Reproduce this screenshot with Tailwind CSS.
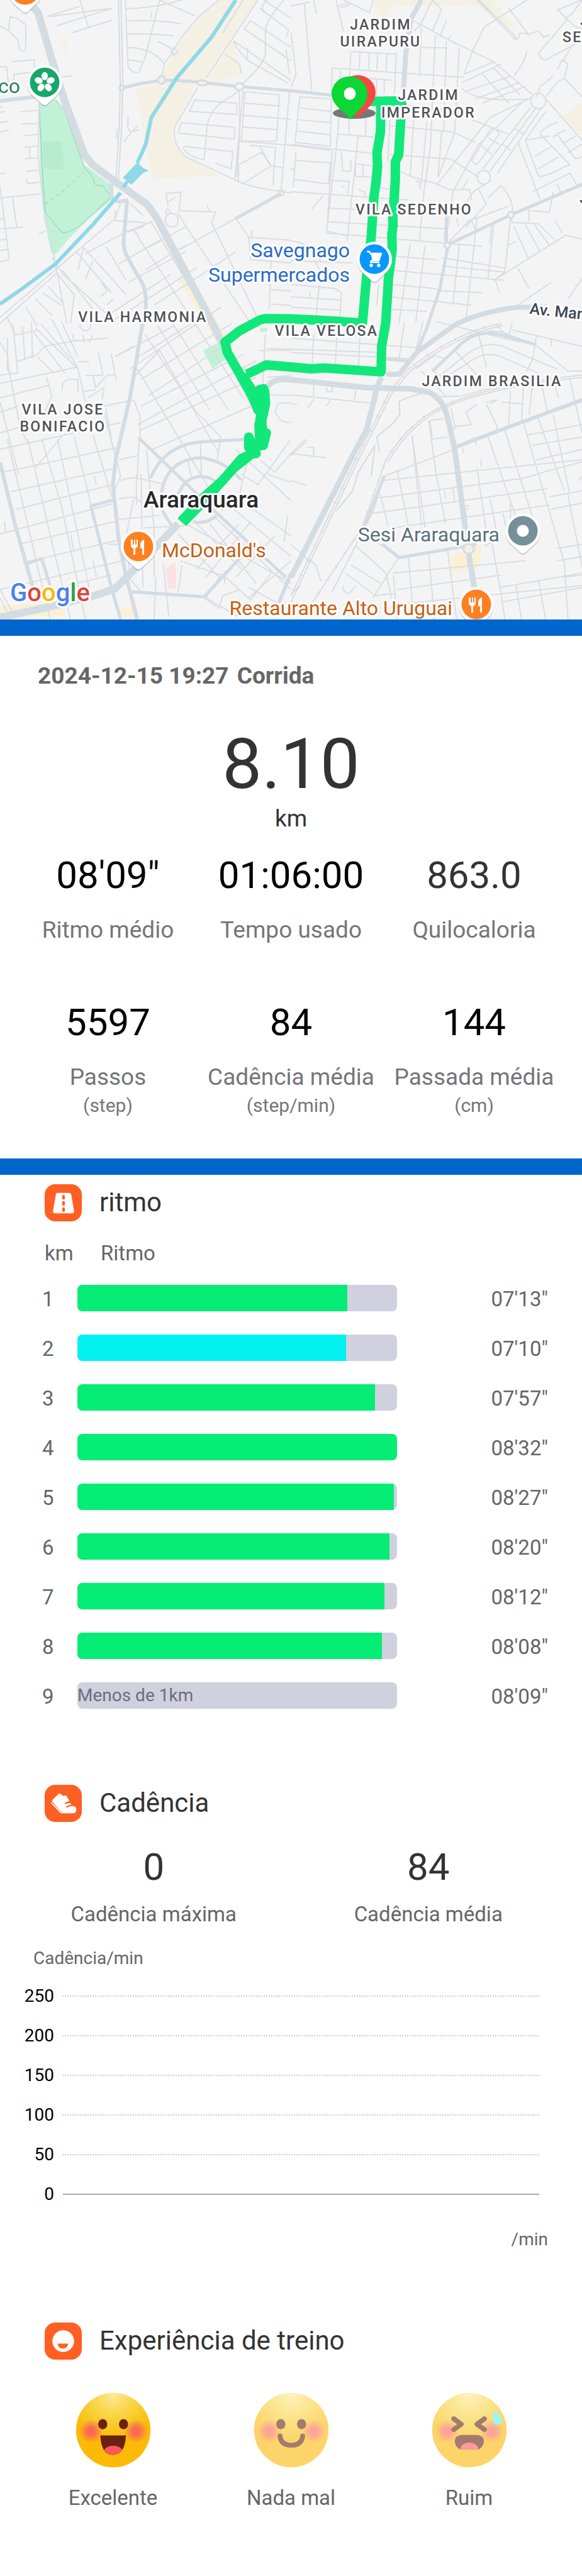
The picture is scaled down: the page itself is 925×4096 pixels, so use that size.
<!DOCTYPE html>
<html lang="pt">
<head>
<meta charset="utf-8">
<meta name="viewport" content="width=device-width, initial-scale=1">
<title>Corrida</title>
<script src="https://cdn.jsdelivr.net/npm/@tailwindcss/browser@4"></script>
</head>
<body class="bg-white font-[Roboto,sans-serif] text-[#333]">
<main>
<section aria-label="Mapa do percurso" class="bg-[#f5f4f5]">
<svg viewBox="0 0 925 985" class="block w-full h-auto" xmlns="http://www.w3.org/2000/svg">
  <defs>
    <g id="pin"><path d="M0 36C-3 36-5 34-8 31L-19 21A28 28 0 1 1 19 21L8 31C5 34 3 36 0 36Z" fill="#8a8f96" opacity=".45" transform="translate(0 2)"/><path d="M0 36C-3 36-5 34-8 31L-19 21A28 28 0 1 1 19 21L8 31C5 34 3 36 0 36Z" fill="#fff"/></g>
    <g id="food"><use href="#pin"/><circle r="23.5" fill="#ff8022"/><path d="M-12-11v8c0 4 2 5 4 6v10h3V3c2-1 4-2 4-6v-8h-2v8h-2v-8h-2v8h-2v-8ZM9-11C5-10 3-6 3-3v6h3v10h3Z" fill="#fff"/></g>
  </defs>
  <g transform="scale(.295 .3278)" fill="none">
    <g fill="#f4f1e4">
      <path d="M1170 0H1390L1110 380L1050 420L945 610Q930 700 1000 760L1185 852L820 870L730 430L870 400L880 350L950 240L1070 80ZM1210 260L1260 180L1300 370L1130 400L1120 380ZM330 195L365 190L362 270ZM2000 0H2650L2780 130L2768 145L2650 70L2560 25L2110 30L2080 90L2040 70ZM3020 570L3136 500V660Z"/>
      <path fill="#faf0d6" d="M960 1350L1010 1310L1170 1560L1220 1640L1180 1680ZM2430 2700L2590 2640V2720L2560 2770H2430ZM0 2940L340 2920L350 2990H0ZM640 2960L740 2930V2990H640Z"/>
      <path fill="#c1f1d6" d="M210 500L300 480L350 540L455 800L590 890L600 970L480 1060L380 1150L300 1235L275 1220L235 1050L215 800ZM1095 1700L1180 1660L1220 1740L1145 1790ZM1400 1590H1440V1610H1400Z"/>
      <path fill="#fbe1e1" d="M890 2765L945 2725L950 2850L910 2860Z"/>
      <path fill="#b8ecd0" d="M230 685H330L345 820H235Z"/>
    </g>
    <g stroke="#93c9ad" stroke-width="1"><path vector-effect="non-scaling-stroke" d="M212 530L230 860L245 1030L335 1130Q400 1125 460 1070L600 955L550 900Q500 905 505 870L470 825L455 815L345 530L300 485"/><path vector-effect="non-scaling-stroke" stroke-dasharray="7 4" d="M240 990L330 935L455 830"/></g>
    <g stroke="#d7dee4" stroke-width="2" stroke-linejoin="round">
      <path vector-effect="non-scaling-stroke" d="M0 125L45 150L95 190L105 240Q120 255 138 240L140 120L90 88L55 80L45 150M65 300L185 290V330M75 410V360L240 345M0 325L35 322L45 400M300 375L390 368M255 80L430 30M275 80L605 40M305 125L605 40M385 160L605 97M430 0L478 135M210 500L205 760L240 1050L290 1240L360 1568M110 542L200 535M115 600H200M122 660L205 652M130 715L205 708M160 710V765M133 770L208 765M143 832L210 825M140 868L152 890L214 884M0 520L20 518M0 545L25 540M0 595L40 588M0 640L48 630M0 960L218 940M0 900L50 1260L0 1270M0 1110L125 1102M68 960L90 1100M0 1065L20 1060M0 1165L35 1160M0 1215L45 1210M210 1135L245 1120M0 842L35 840"/>
      <path vector-effect="non-scaling-stroke" d="M675 0L690 320Q700 350 745 355L785 270L860 0M680 42Q830 40 980 0M860 0L1052 78M680 102Q850 95 975 115M685 165Q800 160 940 175M690 230Q820 230 885 310M690 290L765 300M815 60V88M850 200L935 240L980 180L1070 80L1180 0M935 250L890 300L870 370M935 270L960 250L940 235L920 250ZM1390 0L1110 380M1310 0L1200 160M1400 40L1555 145L1540 180M1350 100L1568 230M1350 100L1315 140L1568 295M1260 200L1568 390M1260 200L1275 230L1330 290L1555 405M1210 260L1290 310L1300 355M1335 230L1330 290M1440 0Q1400 30 1420 60M1530 0Q1430 100 1430 150V260Q1420 320 1300 410M1420 0L1570 90M1540 240L1560 360"/>
      <path vector-effect="non-scaling-stroke" d="M1050 485L1270 500Q1280 510 1275 555L1020 540ZM975 595L1265 618L1262 675L960 645ZM990 710L1255 735L1245 820L1160 790M985 715Q1010 760 1100 775M1290 440L1175 510Q1120 560 1115 620L1100 775M1065 425L945 610Q920 690 1000 760L1260 870Q1330 910 1568 935M1310 440L1265 870M1290 440V680L1275 860M1320 445L1505 460L1490 685H1300L1320 445M1320 500L1510 515M1310 560L1568 578M1305 615L1495 630M1285 685L1568 705L1780 730M1285 800L1410 738L1460 805L1310 890L1285 880ZM1345 705L1485 715L1470 900M1400 710L1460 805L1520 812M1560 440L1515 920M1500 935A15 15 0 1 0 1530 935A15 15 0 1 0 1500 935"/>
      <path vector-effect="non-scaling-stroke" d="M895 938L975 932L965 1022L1162 1028L1140 1080L1400 1568M895 938L905 1000M905 980L945 958M890 1068A35 33 0 1 0 960 1068A35 33 0 1 0 890 1068M893 1028A12 12 0 1 0 917 1028A12 12 0 1 0 893 1028M1115 995L1130 1025M955 1030L1000 1095L1350 1568M620 1020V1070L780 1080L770 1100L690 1125M700 985L770 1045M650 985L620 1060L0 1540M630 560M690 560L688 620L705 640L750 630M740 610L705 645L665 690M630 625V670M1500 940L1270 1060L950 1220M1270 1060L1340 1150L1568 1165M1340 1150L1350 1260L1568 1275M1355 1115V1160M1460 1270L1450 1500M1460 1405L1568 1412M1460 1475L1568 1482"/>
      <path vector-effect="non-scaling-stroke" d="M450 1200L680 1430M570 1195L680 1360M415 1225L600 1420M450 1200L420 1310M500 1265L460 1355M545 1365L575 1410M335 1310L500 1500M300 1320L400 1430L380 1568M230 1420L330 1480M260 1390L340 1470M190 1450L280 1530M140 1490L200 1580M40 1540L80 1620M0 1568L300 1330M280 1250L340 1330L620 1560M540 1440L580 1410M575 1480L610 1450M700 1120Q730 1110 750 1160L1000 1500M810 1070L1060 1450M690 1120L820 1075M460 1230L690 1120M640 1280L870 1160M690 1370L1000 1220M780 1310L1000 1190M530 1560L920 1330M830 1480L1090 1330L1270 1220M600 1560L1060 1300"/>
      <path vector-effect="non-scaling-stroke" d="M740 1790L1200 2480M780 1620L1050 1990L1190 2120M850 1580L1130 1990M930 1568L1230 1990M1000 1500L1310 1930M1060 1450L1190 1660M700 1790L1190 1490M730 1740L1100 1530M620 1730L940 1580M760 1840L1250 1568M800 1920L1300 1620M760 1970L1310 1720M750 2090L1380 1830M820 2180L1380 1960M740 2060L1380 1750M720 1830L860 1700L1180 2200M1000 1100L800 1200M1400 1700H1568M1430 1620L1415 1900M1440 1690L2050 1710M1440 1830L1568 1822M1430 1915L1568 1918M1500 1955H1568M1500 1955L1480 2000L1520 2045L1568 2050"/>
      <path vector-effect="non-scaling-stroke" d="M70 1568L95 1810L0 1820M0 1660L40 1720L50 1810M40 1640V1800M120 1580L135 1750M170 1560L175 1740M80 1625L210 1600M90 1755L200 1720L240 1680M180 1610L350 1810M190 1590L410 1780M220 1570L380 1740M280 1550L420 1790L460 1950M330 1560L420 1730M200 1730L290 1810M240 1680L420 1650M430 1570Q430 1600 460 1605Q490 1600 490 1570M390 1620L400 1655L580 1640M445 1625L455 1660M500 1625L480 1660M420 1755H480M530 1710L555 1820L460 1822M600 1720L625 1840M420 1900V1840H370Q330 1850 335 1895M500 1820L515 1880L580 1820H615M515 1890L450 1900M475 1930L560 1880L550 1940M620 1730L720 1680M0 1860L420 1780M0 1930L260 1870M0 2000L100 1970M50 1800L110 2080L150 2150M0 1950L100 2300M0 2100L120 2070M250 1830L280 1920L240 2000M560 1970L720 1940L755 2020V2110L745 2130M570 1980L600 2130"/>
      <path vector-effect="non-scaling-stroke" d="M40 2130L270 3005M150 2130L290 2670L380 3005M225 2130L330 2450L460 3005M310 2130L480 2850M400 2120L560 2700L600 2850M500 2110L600 2400M0 2180L650 2050M20 2290L640 2170M60 2385L630 2270M90 2470L610 2350M0 2590L600 2445M100 2640L620 2530M120 2730L640 2620M0 2860L660 2720M230 2870L600 2790M560 2000L650 2310L600 2410M640 2230L745 2210M650 2330Q720 2310 740 2320L870 2345M735 2300V2450M750 2120L740 2320M790 2180L800 2300L830 2560V2800M640 2420L720 2410L770 2440M720 2420L680 2600L700 2800M760 2300L770 2850M640 2520L860 2500M190 2270L340 2110M510 2310L518 2350M780 2560L1010 2550M380 2590L400 2680M500 2720L520 2800M0 2860L80 2990M0 2900L50 2990M25 2530L30 2580M580 2640H640"/>
      <path vector-effect="non-scaling-stroke" d="M1010 2225L1030 2310M1080 2150L1085 2300M1190 2120L1170 2230M1300 2300L1390 2350L1568 2130M1400 2230L1480 2290L1568 2200M1270 2180L1568 2430M1330 2250L1290 2400M1440 2300L1568 2340M1130 2540L1380 2830M1160 2510L1568 2860M1060 2540L1300 2760M960 2590L1180 2800M1000 2540L1568 2830M1260 2470L1568 2700M1300 2430L1568 2600M1290 2540L1060 2760M1350 2530L1110 2800M1480 2600L1270 2800M1568 2720L1340 2900M970 2720L1190 2790L1110 2900L1280 2990M700 2810L760 2870M840 2800L830 3005M980 2740L960 2870M880 2740L910 2990M1100 2900L1180 2950L1200 2890L1290 2860M1190 2780L1350 2910L1460 2780M1340 2850L1568 2960M1550 2500L1530 2630M1210 2770V2830"/>
      <path vector-effect="non-scaling-stroke" d="M1568 30L1670 10M1568 160L1595 360L1570 420M1640 20L1680 440M1690 0L1705 70M1810 0L1850 150M1820 30L1880 10M1830 40L1890 20M1850 0L1990 60L2010 0M1895 250L2130 262M1890 250L1880 450M1940 255L1935 335M1990 258L1985 338M2035 258L2030 340M2085 260L2080 345M2135 255L2125 450M1790 330L2500 375M1790 330L1785 450M1835 340L1830 440M1985 380L2110 390M2030 390V480M2070 390V450M2230 100L2410 190L2660 300L2870 460M2230 150L2265 120L2330 0L2380 45L2330 150M2370 180L2405 100M2410 195L2430 175M2270 130L2260 370M2345 170L2320 700L2290 900M2405 200L2390 640M2475 230L2450 640L2360 860M2270 230L2400 232M2180 510L2500 540M2100 610L2440 640L2560 690M2100 750L2430 772L2580 860M2160 830Q2200 860 2350 890L2420 920H2530M2230 560L2210 850M2300 590L2270 890M2380 630L2360 860M2100 580L2090 780"/>
      <path vector-effect="non-scaling-stroke" d="M2490 430Q2570 500 2850 480M2500 360L2660 300M2490 400L2700 310M2520 440L2750 370M2560 480L2800 400M2600 500L2830 420M2600 360L2740 500M2660 330L2800 460M2500 360L2540 260L2610 130L2840 0M2580 0L2770 170L2785 195M2570 0L2780 195M2740 40L2850 170M2790 190L2800 160L2850 165L2900 150L2930 180L2960 170M3000 50L3130 0M3000 40L3050 90L3100 130L3136 140M3040 90L3080 70L3136 0M2900 260L3060 90M2900 260Q2930 310 2960 280L3130 200M3030 300L3110 180M3000 340L3030 290L3060 310L3040 380L3000 400L2940 470M3040 380L3136 470M2980 370L2910 420L2890 470M2840 250L2820 300L2770 370M2860 490A32 30 0 1 0 2940 490A32 30 0 1 0 2860 490M2570 860A34 32 0 1 0 2642 860A34 32 0 1 0 2570 860M2890 520L2640 830M2860 520L2600 820M2920 520L2680 840M2820 490L2580 700L2440 930L2400 1180M2870 470L2640 570L2350 900M2940 480L3136 680M2540 580L2740 650M2540 780L2640 630Q2670 610 2690 650L2570 800ZM2600 710L2650 750M2630 670L2690 700M2710 700L2750 730M2770 620L2820 650M2940 540L2830 680L2960 660M2790 690L2910 970M2910 650Q2920 620 3010 590M2830 680L2900 850Q2910 870 3040 810L3070 800L2910 650M2880 760L2970 710M2900 820L3010 760M3000 650L3050 630M2985 670Q2980 650 3010 660L3100 770L3136 760M3030 700L3100 660M3060 740L3136 700M2870 930L3070 840L3110 900M2920 980L3136 890M2700 900Q2770 970 2760 1040M2700 900L2630 960M2580 920L2620 990L2510 1100M2640 880L2550 930L2500 1000M2530 920L2540 970M2490 920L2520 870M3000 890L3030 950"/>
      <path vector-effect="non-scaling-stroke" d="M1568 930L2200 970M1568 700L2060 750M1615 470L1785 480L1780 710L1590 690ZM1620 525L1785 540M1600 580L1785 595M1595 635L1785 655M1595 735L1580 910M1590 778L1780 790L1770 892L1585 870M1568 820L1585 822M1840 740L1845 830H1890V775M1910 795L2010 805M1915 800V855L2010 860M1955 800V855M1790 875L1880 880L1875 940M1840 905H1860M1930 920L1965 930V960M1680 1015L1740 950M1830 490L1820 650L2010 665M1880 560V650M1970 560V665M1820 650L1760 1120M1930 660L1870 1170M1790 730L1760 1130L2600 1195M1770 1010L2000 1020M1760 1075L2400 1110M1760 1120L1870 1145M2060 800L2050 910L2100 920M2240 880H2260L2265 920M2290 880L2260 1170M2400 1060L2395 1170M2460 1060L2470 1100M2100 1240L2350 1260M2100 1310L2720 1360M2100 1380L2350 1400M2100 1440L2540 1480M2100 1500L2300 1510M2210 1180L2150 1568M2290 1190L2240 1560M2475 1180L2440 1480M2570 1060L2510 1560M2660 1080L2630 1350M2750 1060L2720 1320L2660 1360M2380 1250L2720 1300M2380 1290L2720 1320M2350 1410L2600 1420M2410 1180L2530 1070L2740 1000M2540 1070L2570 1130M2650 1080L2640 1180M2750 1050L2760 1080L2900 1085L2990 1165M2770 1100L2850 1260M2830 1090L2910 1220M2880 1090L2960 1190M2660 1360L3050 1140L3136 1160M2670 1360L2690 1420M2790 1300L2850 1400M2980 930L2960 1030L2840 1020M2850 1020V1075M2990 1070L3030 1130M2740 1190L2780 1170M2790 1480L2970 1370M3136 1350L3060 1450M1568 1170Q1660 1170 1730 1270M1690 1260L1730 1320M1568 1380L1810 1400L1840 1420L1830 1568M1568 1440L1840 1455M1568 1490L1840 1505M1720 1380L1700 1568M1670 1420V1450M1568 1265L1900 1275M2040 1380L2030 1480"/>
      <path vector-effect="non-scaling-stroke" d="M1568 1640L2300 1690M1568 1710L2200 1740M1690 1620L1680 1800M1815 1620L1805 1800M1940 1620L1930 1800M2180 1560L2150 1740M1690 1850V1930M1920 1870L1910 1940M1568 1915L1990 1955M1760 1880V1900H1790V1860M1690 1935L1660 1980M1780 1940L1760 1970M1568 1960H1600M1568 2210L1640 2150Q1660 2130 1640 2135L1568 2200L1760 2220M1655 2170H1690V2210M1568 2330L1650 2355M2280 1560L2240 1700M2350 1560L2800 1660M2330 1800L2460 1690Q2560 1590 2700 1610L2880 1670L3060 1800H3136M2360 1830L2500 1730Q2600 1650 2710 1680L3000 1790M2400 1830L2540 1750Q2620 1700 2700 1730L2900 1810M2240 1790L2340 1725L2400 1740M2450 1700L2580 1830M2580 1630L2620 1780M2270 1800L2400 1920M2340 1800L2430 1880M2370 1925L2490 1920L2700 1870M2760 1600L3136 1680M2970 1640V1680M2760 1560L2740 1640L2670 1570M2890 1630L2870 1740L2840 1800M2310 2040L2390 2030M2315 2040L2330 2130L2410 2120M2310 2040L2350 2300L2400 2540M2220 2110L2270 2550M2430 1980L2450 2070L2540 2060L2510 2000L2570 1960M2440 2080L2460 2080M2620 1950L2680 1940L2640 1960M2620 1960L2680 2070L2660 2110M2750 1900L2740 2070M2820 1880L2810 2040M2870 1860L2850 2010M2920 1870L2950 2000M2980 1850L3010 1930M3070 1840L3136 2100M2700 1950L2820 1960"/>
      <path vector-effect="non-scaling-stroke" d="M2070 2310L2450 2180M2070 2330L3136 2230M2040 2415L2820 2320L2970 2280L3136 2240M2010 2490L2950 2370M2120 2560L2960 2450M2140 2280L2200 2550M2050 2400L2090 2550M2220 2110L2290 2560M2490 2170L2500 2200M2570 2270L2620 2580M2630 2120L2800 2560M2720 2090L2870 2510M2820 2050L3040 2730L3060 3005M2900 2030L3040 2380M2980 2010L3070 2400M2840 2110L3136 2060M2870 2160L3136 2120M2890 2230L3136 2180M2960 2410L3136 2380M2970 2470L3136 2440M3060 2400L3136 2750M2640 2420L2680 2600M2710 2490L2730 2570M2750 2430V2560M2395 2380L2400 2420M2440 2370L2450 2430M2500 2455H2530M2500 2440V2470H2525M2550 2120L2570 2160M2590 2230L2595 2265M2070 2310L2010 2480L1960 2570L1790 2870M1920 2650L2080 2780L2110 2900M1960 2590L2150 2700L2080 2800L2010 2900M1890 2740L2050 2830M1860 2780L2010 2880M2120 2780L2830 2720M2140 2860L2700 2790M2160 2930L3136 2840M2120 2790L2140 3005M2200 2700L2230 3005M2310 2680L2340 3005M2410 2660L2460 3005M2610 2650L2650 2630L2700 2880L2720 3005M2690 2850L3136 2780M2700 2920L3136 2850M2780 2840L2810 3005M2900 2810L2940 3005M3030 2800L3136 2790M3000 2660L3136 2640M3000 2720L3136 2700M1568 2640L1640 2700L1700 2740L1730 2820M1850 2840Q1840 2870 1880 2880L1920 2840M2010 2890L2130 2880M1568 2880L1620 2840M3136 2310L3120 2330"/>
    </g>
    <g stroke="#d3d4d8" stroke-width="1.5">
      <path vector-effect="non-scaling-stroke" d="M2700 1570Q2480 1600 2200 1790L2100 1900L1900 2260L1568 2890M2710 1580Q2490 1610 2210 1800L2110 1910L1910 2270L1568 2920M3136 1820Q2700 1860 2440 1950Q2220 2020 2080 2230L1950 2560L1670 2940M3136 1830Q2700 1870 2440 1960Q2230 2030 2090 2240"/>
      <path vector-effect="non-scaling-stroke" stroke="#dadbde" stroke-width="6" stroke-dasharray="1.5 24" d="M2700 1570Q2480 1600 2200 1790L2100 1900L1900 2260L1568 2890M2440 1950Q2220 2020 2080 2230L1950 2560L1670 2940"/>
      <path vector-effect="non-scaling-stroke" stroke="#d3dae0" stroke-width="2" d="M2300 1900Q2150 1940 2150 1950L2155 2010L2120 2050L2030 2120L2045 2190M2020 2160L1930 2290L1900 2380L1810 2480M2020 2160L2000 2310"/>
    </g>
    <g stroke="#d3dce3" stroke-linejoin="round">
      <path vector-effect="non-scaling-stroke" stroke-width="6" d="M645 0L655 400L650 600L630 880M600 890V950Q610 990 690 970"/>
      <path vector-effect="non-scaling-stroke" stroke="#f5f4f5" stroke-width="2" d="M645 0L655 400L650 600L630 880"/>
      <path vector-effect="non-scaling-stroke" stroke-width="5" d="M650 428L760 405L870 390L950 390L1090 400L1290 420L1568 440L1790 462M3136 895L2758 1040L2415 1185L2370 1400L2300 1590L2248 1700M2405 1050V1180M1515 940L1270 1060M610 2425L490 2455L600 2850L650 3005M140 2735L225 2710L280 2870M2568 2640L2150 2705L2060 2640M2070 2310L1960 2560M2330 1800L2460 1690Q2560 1590 2700 1625L2880 1670M2060 1740L2200 1752"/>
      <path vector-effect="non-scaling-stroke" stroke-width="5" d="M810 2320Q890 2150 1100 2142L1320 2132M870 2390Q900 2225 1090 2220Q1220 2240 1300 2330M960 2400Q1000 2305 1100 2312Q1160 2320 1190 2370M875 2475Q900 2520 940 2565M1040 2530Q1120 2545 1165 2500M745 2122L930 2282L1160 2482L1540 2800M700 2870L1100 2895L1300 2700"/>
      <path vector-effect="non-scaling-stroke" stroke-width="6" d="M685 970L665 1180Q670 1230 700 1270L770 1380Q790 1420 785 1500L760 1610L700 1930L625 2220L608 2350L640 2620L680 2800L740 3005M0 2242L80 2540L180 2860M2450 2170L2700 2085L3136 1940M0 490L190 470M1500 2930L1568 2780"/>
      <path vector-effect="non-scaling-stroke" stroke-width="8" d="M2270 0L2215 90L2185 270L2173 450M2950 1490H2790Q2600 1510 2458 1572L2248 1707L2150 1815H2080"/>
      <path vector-effect="non-scaling-stroke" stroke-width="9" d="M1440 1880Q1470 1830 1568 1842L1968 1880L2218 1887L2308 1902Q2390 1930 2415 2040L2450 2180L2505 2550L2518 2630M2525 2690L2555 2850M2055 1830L2030 1880L2010 1960L1975 2085L1900 2210L1568 2800"/>
      <path vector-effect="non-scaling-stroke" stroke-width="12" d="M140 0L205 60L270 260L345 480L455 750L500 800L620 880L790 990L840 1050L1000 1320L1110 1510L1190 1650L1380 1980M0 2995L260 2945L500 2892L620 2855L760 2730L960 2540"/>
      <g fill="#f4f1e4" stroke-width="3"><ellipse vector-effect="non-scaling-stroke" cx="870" cy="388" rx="20" ry="18"/><ellipse vector-effect="non-scaling-stroke" cx="1090" cy="402" rx="28" ry="13"/><ellipse vector-effect="non-scaling-stroke" cx="2525" cy="2662" rx="28" ry="24"/></g>
      <g fill="#f5f4f5" stroke-width="3"><ellipse vector-effect="non-scaling-stroke" cx="1290" cy="420" rx="24" ry="17"/><circle vector-effect="non-scaling-stroke" cx="656" cy="427" r="12"/><circle vector-effect="non-scaling-stroke" cx="2752" cy="1042" r="15"/><circle vector-effect="non-scaling-stroke" cx="2410" cy="1190" r="15"/></g>
    </g>
    <path vector-effect="non-scaling-stroke" stroke="#8fd8e8" stroke-width="6" d="M1270 0L1140 180L950 380L815 570L785 700L740 790M685 880L665 910M650 935L500 1090L300 1280L120 1400L0 1475"/>
    <path fill="#8fd8e8" d="M740 788L772 815L802 828L770 840L708 896L662 862Z"/>
    <g stroke="#12e87a" stroke-width="15" stroke-linejoin="round">
      <path vector-effect="non-scaling-stroke" d="M1990 492L2140 490L2165 505L2158 600L2148 750L2130 785L2130 870L2124 960L2116 1060L2118 1090L2111 1140L2113 1210L2106 1260L2093 1350L2078 1568L2056 1680L2053 1804L1748 1785L1678 1789L1568 1780L1435 1770L1330 1815"/>
      <path vector-effect="non-scaling-stroke" d="M2052 500L2050 640L2031 740L2034 800L2026 880L2014 960L2000 1150L1975 1340L1953 1567L1800 1557L1568 1547L1430 1545L1400 1552L1290 1605L1212 1660L1225 1710L1280 1795L1340 1890L1375 1950L1390 1990L1415 1960L1398 1890L1420 1885L1425 1960L1415 2020L1395 2060L1400 2140L1435 2100L1418 2160L1340 2170L1340 2120L1380 2200L1360 2200L1260 2270L1100 2430L985 2535"/>
      <path vector-effect="non-scaling-stroke" stroke-width="18" d="M1300 1820L1350 1890L1395 1985M1420 1890L1425 1960L1405 2040L1410 2110"/>
      <path vector-effect="non-scaling-stroke" d="M1370 2195L1300 2225L1200 2330L1100 2410L975 2530M1410 2010L1400 2100L1440 2080"/>
    </g>
  </g>
  <ellipse cx="563" cy="180" rx="34" ry="9" fill="#777"/>
  <path d="M568 187C561 178 540 166 540 147A28 27 0 0 1 597 147C597 166 577 178 568 187Z" fill="#f5493f"/>
  <path d="M557 190C550 179 527 168 527 149A28 27 0 0 1 584 149C584 168 564 179 557 190Z" fill="#0bd735"/>
  <ellipse cx="556" cy="149" rx="9.5" ry="10" fill="#fff"/>

  <g font-family="Roboto, sans-serif" stroke="#fff" stroke-width="6" stroke-linejoin="round" paint-order="stroke">
    <g font-size="23" font-weight="500" fill="#505256" text-anchor="middle" class="tracking-widest">
      <text x="605" y="47">JARDIM</text><text x="605" y="74">UIRAPURU</text>
      <text x="681" y="159">JARDIM</text><text x="681" y="187">IMPERADOR</text>
      <text x="658" y="341">VILA SEDENHO</text>
      <text x="227" y="512">VILA HARMONIA</text>
      <text x="519" y="534">VILA VELOSA</text>
      <text x="100" y="659">VILA JOSE</text><text x="100" y="686">BONIFACIO</text>
      <text x="782" y="614">JARDIM BRASILIA</text>
      <text x="894" y="67" text-anchor="start">SE</text>
      <text x="922" y="41" text-anchor="start">J</text><text x="921" y="323" text-anchor="start">J</text>
    </g>
    <g font-size="32" fill="#2a6bc8" text-anchor="end"><text x="556" y="409">Savegnago</text><text x="556" y="448">Supermercados</text><text x="32" y="148" fill="#268060">co</text></g>
    <text x="841" y="499" font-size="25" font-weight="500" fill="#3c4656" transform="rotate(6 841 499)">Av. Man</text>
    <text x="228" y="807" font-size="37" font-weight="500" fill="#26282b">Araraquara</text>
    <g font-size="32"><text x="257" y="886" fill="#c65f14">McDonald's</text><text x="794" y="861" fill="#5b717b" text-anchor="end">Sesi Araraquara</text><text x="719" y="978" fill="#c65f14" text-anchor="end">Restaurante Alto Uruguai</text></g>
    <text x="16" y="956" font-size="40" font-weight="500" fill="#4a83ec">G<tspan fill="#dc4639">o</tspan><tspan fill="#f1bd0d">o</tspan>g<tspan fill="#2da04f">l</tspan><tspan fill="#dc4639">e</tspan></text>
  </g>
  <use href="#food" x="40" y="-16"/>
  <use href="#food" x="220" y="869"/>
  <use href="#food" x="757" y="961"/>
  <g transform="translate(71 131)"><use href="#pin"/><circle r="23.5" fill="#17a76b"/><g fill="#fff"><ellipse cy="-10" rx="5" ry="6.5"/><ellipse cy="-10" rx="5" ry="6.5" transform="rotate(72)"/><ellipse cy="-10" rx="5" ry="6.5" transform="rotate(144)"/><ellipse cy="-10" rx="5" ry="6.5" transform="rotate(216)"/><ellipse cy="-10" rx="5" ry="6.5" transform="rotate(288)"/></g></g>
  <g transform="translate(595 412)"><use href="#pin"/><circle r="23.5" fill="#0896ff"/><path d="M-12-12h4l1.500 3H11L7 2H-4l-2 3H8" fill="none" stroke="#fff" stroke-width="2.500" stroke-linejoin="round"/><path d="M-6-8H10L6 2H-3Z" fill="#fff"/><circle cx="-5" cy="10" r="2.700" fill="#fff"/><circle cx="7" cy="10" r="2.700" fill="#fff"/></g>
  <g transform="translate(831 844)"><use href="#pin"/><circle r="23.5" fill="#76909b"/><circle r="9.500" fill="#fff"/></g>
</svg>
</section>

<section class="border-y-[26px] border-[#0066cc] px-[26px] pb-[60px] pt-[39px]">
  <h1 class="pl-[34px] text-[37px] font-bold leading-[50px] text-[#666]">2024-12-15 19:27 <span class="ml-1">Corrida</span></h1>
  <div class="pt-[49px] text-center">
    <p class="text-[112px] leading-[132px]">8.10</p>
    <p class="text-[37px] leading-[42px]">km</p>
  </div>
  <dl class="mt-[34px] grid grid-cols-3 gap-y-[91px] text-center">
    <div class="flex flex-col-reverse justify-end"><dt class="mt-[31px] whitespace-nowrap text-[37px] leading-[42px] text-[#75757a]">Ritmo médio</dt><dd class="text-[60px] leading-[70px] text-black">08'09"</dd></div>
    <div class="flex flex-col-reverse justify-end"><dt class="mt-[31px] whitespace-nowrap text-[37px] leading-[42px] text-[#75757a]">Tempo usado</dt><dd class="text-[60px] leading-[70px] text-black">01:06:00</dd></div>
    <div class="flex flex-col-reverse justify-end"><dt class="mt-[31px] whitespace-nowrap text-[37px] leading-[42px] text-[#75757a]">Quilocaloria</dt><dd class="text-[60px] leading-[70px]">863.0</dd></div>
    <div class="flex flex-col-reverse justify-end"><dt class="mt-[31px] whitespace-nowrap text-[37px] leading-[42px] text-[#75757a]">Passos<span class="block text-[30px] leading-[48px]">(step)</span></dt><dd class="text-[60px] leading-[70px] text-black">5597</dd></div>
    <div class="flex flex-col-reverse justify-end"><dt class="mt-[31px] whitespace-nowrap text-[37px] leading-[42px] text-[#75757a]">Cadência média<span class="block text-[30px] leading-[48px]">(step/min)</span></dt><dd class="text-[60px] leading-[70px] text-black">84</dd></div>
    <div class="flex flex-col-reverse justify-end"><dt class="mt-[31px] whitespace-nowrap text-[37px] leading-[42px] text-[#75757a]">Passada média<span class="block text-[30px] leading-[48px]">(cm)</span></dt><dd class="text-[60px] leading-[70px] text-black">144</dd></div>
  </dl>
</section>

<section class="pt-[14px]">
  <h2 class="flex items-center gap-[28px] pl-[71px] text-[42px] leading-[60px]">
    <svg viewBox="0 0 60 60" class="size-[59px] shrink-0" aria-hidden="true"><rect width="60" height="60" rx="17" fill="#ff5f22"/><path d="M20 14H40Q42 14 43 17L47.500 43Q48 47 44 47H17Q13 47 13.500 43L18 17Q18.500 14 20 14Z" fill="#fff"/><path d="M30.500 19.500v3M30.500 29.500v3M30.500 39.500v3" stroke="#ff5f22" stroke-width="4.500" stroke-linecap="round"/></svg>
    ritmo
  </h2>
  <table class="mt-[20px] w-full text-[33px] text-[#666]">
    <thead><tr class="h-[62px]"><th scope="col" class="w-[123px] pl-[71px] text-left font-normal">km</th><th scope="col" class="pl-[37px] text-left font-normal">Ritmo</th><th class="w-[240px]"></th></tr></thead>
    <tbody>
      <tr class="h-[79px]"><td class="pl-[67px] pt-1">1</td><td><div class="h-[42px] w-[508px] max-w-full overflow-hidden rounded-lg bg-[#d0d0df]"><div class="h-full bg-[#05ed74]" style="width:84.500%"></div></div></td><td class="pr-[54px] pt-1 text-right">07'13"</td></tr>
      <tr class="h-[79px]"><td class="pl-[67px] pt-1">2</td><td><div class="h-[42px] w-[508px] max-w-full overflow-hidden rounded-lg bg-[#d0d0df]"><div class="h-full bg-[#02f2f2]" style="width:84%"></div></div></td><td class="pr-[54px] pt-1 text-right">07'10"</td></tr>
      <tr class="h-[79px]"><td class="pl-[67px] pt-1">3</td><td><div class="h-[42px] w-[508px] max-w-full overflow-hidden rounded-lg bg-[#d0d0df]"><div class="h-full bg-[#05ed74]" style="width:93.100%"></div></div></td><td class="pr-[54px] pt-1 text-right">07'57"</td></tr>
      <tr class="h-[79px]"><td class="pl-[67px] pt-1">4</td><td><div class="h-[42px] w-[508px] max-w-full overflow-hidden rounded-lg bg-[#d0d0df]"><div class="h-full bg-[#05ed74]" style="width:100%"></div></div></td><td class="pr-[54px] pt-1 text-right">08'32"</td></tr>
      <tr class="h-[79px]"><td class="pl-[67px] pt-1">5</td><td><div class="h-[42px] w-[508px] max-w-full overflow-hidden rounded-lg bg-[#d0d0df]"><div class="h-full bg-[#05ed74]" style="width:99%"></div></div></td><td class="pr-[54px] pt-1 text-right">08'27"</td></tr>
      <tr class="h-[79px]"><td class="pl-[67px] pt-1">6</td><td><div class="h-[42px] w-[508px] max-w-full overflow-hidden rounded-lg bg-[#d0d0df]"><div class="h-full bg-[#05ed74]" style="width:97.700%"></div></div></td><td class="pr-[54px] pt-1 text-right">08'20"</td></tr>
      <tr class="h-[79px]"><td class="pl-[67px] pt-1">7</td><td><div class="h-[42px] w-[508px] max-w-full overflow-hidden rounded-lg bg-[#d0d0df]"><div class="h-full bg-[#05ed74]" style="width:96%"></div></div></td><td class="pr-[54px] pt-1 text-right">08'12"</td></tr>
      <tr class="h-[79px]"><td class="pl-[67px] pt-1">8</td><td><div class="h-[42px] w-[508px] max-w-full overflow-hidden rounded-lg bg-[#d0d0df]"><div class="h-full bg-[#05ed74]" style="width:95.300%"></div></div></td><td class="pr-[54px] pt-1 text-right">08'08"</td></tr>
      <tr class="h-[79px]"><td class="pl-[67px] pt-1">9</td><td><div class="h-[42px] w-[508px] max-w-full overflow-hidden rounded-lg bg-[#d0d0df] text-[28px] leading-[42px] text-[#6c6c7c]">Menos de 1km</div></td><td class="pr-[54px] pt-1 text-right">08'09"</td></tr>
    </tbody>
  </table>
</section>

<section class="pt-[102px]">
  <h2 class="flex items-center gap-[28px] pl-[71px] text-[42px] leading-[60px]">
    <svg viewBox="0 0 60 60" class="size-[59px] shrink-0" aria-hidden="true"><rect width="60" height="60" rx="17" fill="#ff5f22"/><path d="M22 15Q24 13 26 15L30 18L34 17Q35 17 36 19L40 26L33 29Q31 31 34 31L41 29L43 32L36 34Q33 36 36 36.500L44 34L49 35Q52 38 51 42Q50 46 46 46H29L12 27Q11 26 13 24ZM11.500 28.500L27.500 45Q28 47 26 46L10.500 30Q10 28 11.500 28.500Z" fill="#fff"/></svg>
    Cadência
  </h2>
  <dl class="mt-[37px] grid grid-cols-2 px-[26px] text-center">
    <div class="flex flex-col-reverse"><dt class="mt-5 text-[33px] leading-[40px] text-[#666]">Cadência máxima</dt><dd class="text-[60px] leading-[70px]">0</dd></div>
    <div class="flex flex-col-reverse"><dt class="mt-5 text-[33px] leading-[40px] text-[#666]">Cadência média</dt><dd class="text-[60px] leading-[70px]">84</dd></div>
  </dl>
  <figure class="mt-[30px] pr-[54px] text-[28px] text-black">
    <figcaption class="pl-[53px] leading-[40px] text-[#666]">Cadência/min</figcaption>
    <div class="mt-2 pr-[14px]">
      <div class="flex h-[63px] items-center gap-[14px]"><span class="w-[86px] text-right">250</span><span class="flex-1 border-t-2 border-dotted border-[#ccc]"></span></div>
      <div class="flex h-[63px] items-center gap-[14px]"><span class="w-[86px] text-right">200</span><span class="flex-1 border-t-2 border-dotted border-[#ccc]"></span></div>
      <div class="flex h-[63px] items-center gap-[14px]"><span class="w-[86px] text-right">150</span><span class="flex-1 border-t-2 border-dotted border-[#ccc]"></span></div>
      <div class="flex h-[63px] items-center gap-[14px]"><span class="w-[86px] text-right">100</span><span class="flex-1 border-t-2 border-dotted border-[#ccc]"></span></div>
      <div class="flex h-[63px] items-center gap-[14px]"><span class="w-[86px] text-right">50</span><span class="flex-1 border-t-2 border-dotted border-[#ccc]"></span></div>
      <div class="flex h-[63px] items-center gap-[14px]"><span class="w-[86px] text-right">0</span><span class="flex-1 border-t-2 border-[#aaa]"></span></div>
    </div>
    <p class="mt-[21px] text-right leading-[40px] text-[#666]">/min</p>
  </figure>
</section>

<section class="pb-[105px] pt-[111px]">
  <h2 class="flex items-center gap-[28px] pl-[71px] text-[42px] leading-[60px]">
    <svg viewBox="0 0 60 60" class="size-[59px] shrink-0" aria-hidden="true"><rect width="60" height="60" rx="17" fill="#ff5f22"/><circle cx="30" cy="30" r="17.500" fill="#fff"/><path d="M21 34H38Q37 42 29.500 42T21 34Z" fill="#ff5f22"/></svg>
    Experiência de treino
  </h2>
  <div class="mt-[52px] grid grid-cols-3 px-[38px] text-[33px] leading-[40px] text-[#666]">
    <button type="button" aria-pressed="true" class="flex flex-col items-center gap-[28px]">
      <svg viewBox="0 0 140 140" class="size-[120px]" aria-hidden="true">
        <defs>
          <radialGradient id="skin" cx=".5" cy=".02" r=".62"><stop offset="0" stop-color="#ffe998"/><stop offset=".35" stop-color="#fbd955"/><stop offset=".75" stop-color="#f8c71f"/><stop offset="1" stop-color="#fcb906"/></radialGradient>
          <radialGradient id="blush"><stop offset="0" stop-color="#f9625c"/><stop offset=".35" stop-color="#f9625c" stop-opacity=".85"/><stop offset="1" stop-color="#f9625c" stop-opacity="0"/></radialGradient>
        </defs>
        <g id="head"><circle cx="70" cy="70" r="69" fill="url(#skin)"/><circle cx="29" cy="72" r="22" fill="url(#blush)"/><circle cx="112" cy="72" r="22" fill="url(#blush)"/></g>
        <g fill="#682212"><ellipse cx="50.500" cy="59" rx="8.500" ry="9.500"/><ellipse cx="89" cy="59" rx="8.500" ry="9.500"/><path d="M46 80H93.500Q92 115 70 116T46 80Z"/></g>
        <path d="M53 107Q59 99 70 99T87 107Q80 116 70 116T53 107Z" fill="#ff5758"/>
      </svg>
      Excelente
    </button>
    <button type="button" aria-pressed="false" class="flex flex-col items-center gap-[28px]">
      <svg viewBox="0 0 140 140" class="size-[120px] opacity-60" aria-hidden="true"><use href="#head"/><g fill="#682212"><ellipse cx="50.500" cy="59" rx="8.500" ry="9.500"/><ellipse cx="89" cy="59" rx="8.500" ry="9.500"/></g><path d="M49 81Q51 98 70 98T91 81" fill="none" stroke="#682212" stroke-width="9" stroke-linecap="round"/></svg>
      Nada mal
    </button>
    <button type="button" aria-pressed="false" class="flex flex-col items-center gap-[28px]">
      <svg viewBox="0 0 140 140" class="size-[120px] opacity-60" aria-hidden="true"><use href="#head"/><path d="M41 49L55 59L41 69M98 49L84 59L98 69" fill="none" stroke="#682212" stroke-width="9" stroke-linecap="round" stroke-linejoin="round"/><path d="M52 106Q43 99 43 91Q43 79 58 79H82Q97 79 97 91Q97 99 88 106Z" fill="#682212"/><path d="M52 106Q57 93 70 93T88 106Z" fill="#ff5758"/><path d="M117 33Q130 44 130 52Q129 60 121 60Q114 59 114 50Q114 42 117 33Z" fill="#55f0ff"/></svg>
      Ruim
    </button>
  </div>
</section>
</main>
</body>
</html>
